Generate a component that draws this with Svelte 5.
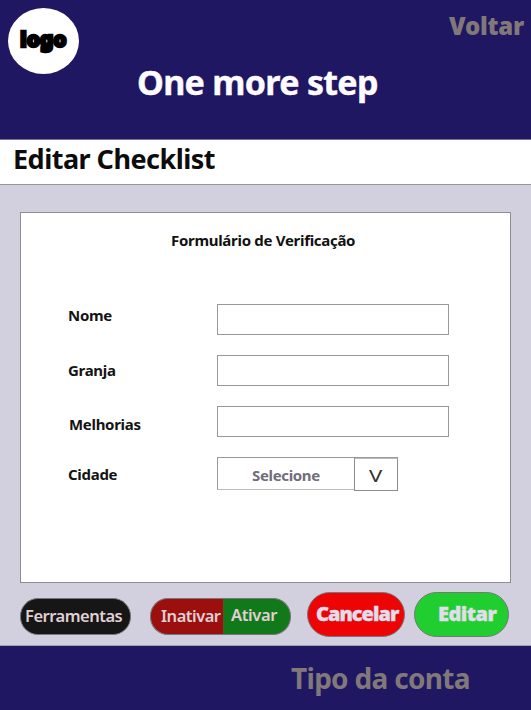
<script>
  const fields = [
    { label: 'Nome', kind: 'nome' },
    { label: 'Granja', kind: 'granja' },
    { label: 'Melhorias', kind: 'melhorias' }
  ];
</script>

<div class="page">
  <header>
    <div class="logo"><span>logo</span></div>
    <h1><span>One more step</span></h1>
    <a class="back" href="#voltar"><span>Voltar</span></a>
  </header>

  <div class="title"><h2><span>Editar Checklist</span></h2></div>

  <main>
    <section class="panel">
      <h3><span>Formulário de Verificação</span></h3>
      <form>
        {#each fields as field}
          <div class="row">
            <label class={field.kind} for={field.kind}><span>{field.label}</span></label>
            <input id={field.kind} />
          </div>
        {/each}
        <div class="row">
          <label class="cidade" for="cidade"><span>Cidade</span></label>
          <button type="button" class="select" id="cidade">
            <span class="value">Selecione</span>
            <span class="arrow"><i>V</i></span>
          </button>
        </div>
      </form>
    </section>

    <div class="actions">
      <button class="tools"><span>Ferramentas</span></button>
      <div class="toggle">
        <button class="off"><span>Inativar</span></button>
        <button class="on"><span>Ativar</span></button>
      </div>
      <button class="cancel"><span>Cancelar</span></button>
      <button class="edit"><span>Editar</span></button>
    </div>
  </main>

  <footer><span>Tipo da conta</span></footer>
</div>

<style>
  :global(body) { margin: 0; }
  * { box-sizing: border-box; }
  .page {
    width: 531px;
    height: 710px;
    overflow: hidden;
    display: flex;
    flex-direction: column;
    font-family: "Noto Sans", "Open Sans", sans-serif;
    background: #d2d0df;
    white-space: nowrap;
  }
  h1, h2, h3 { margin: 0; }
  button {
    font-family: inherit;
    padding: 0;
    margin: 0;
    display: block;
    text-align: left;
    white-space: nowrap;
  }
  header {
    height: 140px;
    flex: none;
    display: flex;
    align-items: flex-start;
    background: #1f1762;
    border-bottom: 1px solid #77758a;
  }
  .logo {
    flex: none;
    width: 71px;
    height: 66px;
    margin: 8px 0 0 8px;
    padding: 17px 0 0 12px;
    border-radius: 50%;
    background: #fff;
    color: #000;
    font-size: 21px;
    line-height: 28px;
    font-weight: 900;
    letter-spacing: -0.1px;
    -webkit-text-stroke: 2.4px #000;
  }
  h1 {
    width: 312px;
    margin-top: 58px;
    padding-left: 58px;
    color: #fffcff;
    font-size: 34px;
    line-height: 48px;
    letter-spacing: -0.7px;
    -webkit-text-stroke: 0.4px #fffcff;
  }
  .back {
    margin: 9px 0 0 58px;
    color: #817979;
    font-size: 24px;
    line-height: 34px;
    font-weight: 900;
    letter-spacing: -0.25px;
    text-decoration: none;
  }
  .title {
    flex: none;
    height: 45px;
    padding: 4px 0 0 13px;
    background: #fff;
    border-bottom: 1px solid #969696;
  }
  h2 { color: #0c0c0c; font-size: 27px; line-height: 30px; letter-spacing: -0.52px; }
  main { flex: none; height: 461px; padding: 27px 0 0 20px; border-bottom: 1px solid #9d9fb9; }
  .panel {
    width: 491px;
    height: 371px;
    padding: 17px 0 0 47px;
    border: 1px solid #8e8e8e;
    background: #fff;
  }
  h3 { padding-left: 103px; color: #111; font-size: 15px; line-height: 20px; letter-spacing: -0.3px; }
  form { display: grid; gap: 20px; margin-top: 54px; }
  .row { display: flex; align-items: flex-start; height: 31px; }
  label { width: 149px; color: #141414; font-size: 15px; font-weight: 700; line-height: 20px; letter-spacing: -0.3px; }
  .nome { padding-top: 1px; }
  .granja { padding-top: 5px; }
  .melhorias { padding: 8px 0 0 1px; }
  .cidade { padding-top: 7px; }
  input { width: 232px; height: 31px; padding: 0; border: 1px solid #999; background: #fff; outline: 0; }
  .select {
    display: flex;
    flex: none;
    align-items: flex-start;
    width: 181px;
    height: 33px;
    border: 1px solid #999;
    border-bottom-color: #bbb;
    background: #fff;
  }
  .value { flex: none; width: 136px; padding: 7px 0 0 34px; color: #706d7c; font-size: 15px; line-height: 20px; font-weight: 700; letter-spacing: -0.35px; }
  .arrow {
    flex: none;
    width: 44px;
    height: 33px;
    padding: 7px 0 0 14px;
    border: 1px solid #8c8c8c;
    border-top-color: #bbb;
    background: #fff;
    color: #333;
    font-size: 17px;
    line-height: 20px;
  }
  .arrow i { display: inline-block; font-style: normal; transform: scaleX(1.3); transform-origin: left; }
  .actions { display: flex; align-items: flex-start; padding-top: 9px; }
  .actions button { border: 1px solid #777; }
  .tools, .toggle { margin-top: 6px; height: 37px; }
  .tools, .off, .on { font-size: 16.5px; font-weight: 600; line-height: 24px; letter-spacing: -0.5px; color: #e0d0d5; }
  .actions .tools { width: 111px; padding: 0 0 2px 4px; border-radius: 18px; background: #161616; }
  .toggle { display: flex; width: 141px; margin-left: 19px; }
  .actions .off { width: 73px; height: 37px; padding: 0 0 2px 10px; border-right: 0; border-radius: 18px 0 0 18px; background: #9b100f; }
  .actions .on { width: 68px; height: 37px; padding: 0 0 4px 7px; border-left-color: #3c6620; border-radius: 0 18px 18px 0; background: #12791b; letter-spacing: -0.4px; }
  .cancel, .edit { height: 45px; font-size: 20px; font-weight: 900; line-height: 28px; color: #e2ddea; }
  .actions .cancel { width: 98px; margin-left: 16px; padding: 0 0 1px 8px; border-radius: 23px; background: #ed0505; letter-spacing: -1px; -webkit-text-stroke: 0.4px #e2ddea; }
  .actions .edit { width: 95px; margin-left: 9px; padding: 0 0 1px 23px; border-radius: 23px; background: #20ce30; letter-spacing: -0.5px; -webkit-text-stroke: 0.4px #e2ddea; }
  footer {
    flex: 1;
    padding: 13px 0 0 291px;
    background: #1f1762;
    color: #817979;
    font-size: 28px;
    line-height: 38px;
    font-weight: 700;
    letter-spacing: -0.7px;
  }
</style>
